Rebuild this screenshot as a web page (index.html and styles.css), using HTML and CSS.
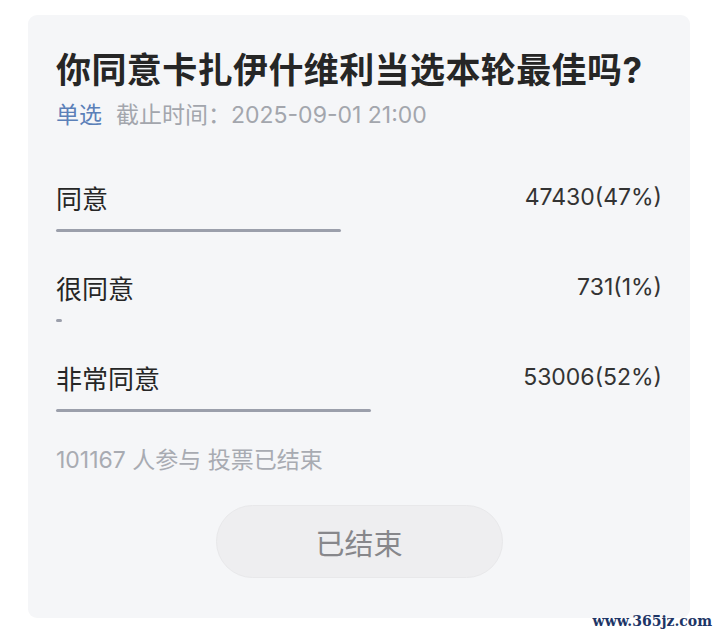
FILE: index.html
```html
<!DOCTYPE html>
<html lang="zh-CN">
<head>
<meta charset="utf-8">
<title>投票</title>
<link rel="stylesheet" href="styles.css">
</head>
<body>
<div class="page">
  <div class="card">
    <h1 class="title">你同意卡扎伊什维利当选本轮最佳吗?</h1>
    <div class="meta"><span class="type">单选</span><span class="deadline">截止时间：2025-09-01 21:00</span></div>
    <div class="options">
      <div class="option">
        <div class="row"><span class="label">同意</span><span class="count">47430(47%)</span></div>
        <div class="track"><div class="bar" style="width:47%"></div></div>
      </div>
      <div class="option">
        <div class="row"><span class="label">很同意</span><span class="count">731(1%)</span></div>
        <div class="track"><div class="bar" style="width:1%"></div></div>
      </div>
      <div class="option">
        <div class="row"><span class="label">非常同意</span><span class="count">53006(52%)</span></div>
        <div class="track"><div class="bar" style="width:52%"></div></div>
      </div>
    </div>
    <div class="footer">101167 人参与 投票已结束</div>
    <div class="btn-wrap"><div class="btn">已结束</div></div>
  </div>
  <div class="watermark">www.365jz.com</div>
</div>
</body>
</html>
```

FILE: styles.css
```css
* { box-sizing: border-box; }
html, body {
  margin: 0;
  padding: 0;
  background: #ffffff;
}
body {
  font-family: "Inter", "Noto Sans CJK SC", sans-serif;
}
.page {
  position: relative;
  width: 720px;
  height: 637px;
  padding: 15px 30px 0 28px;
}
.card {
  width: 662px;
  height: 603px;
  background: #f5f6f8;
  border-radius: 9px;
  padding: 35px 28px 0 28px;
}
.title {
  margin: 0;
  font-size: 35px;
  line-height: 40px;
  font-weight: 700;
  color: #262626;
  letter-spacing: 0.4px;
}
.meta {
  margin-top: 10px;
  font-size: 23px;
  line-height: 30px;
  color: #a3a6ad;
  display: flex;
  gap: 14px;
}
.type {
  color: #5b80b8;
}
.options {
  margin-top: 49px;
  display: flex;
  flex-direction: column;
}
.option {
  height: 90px;
}
.row {
  display: flex;
  justify-content: space-between;
  align-items: center;
  height: 36px;
}
.label {
  font-size: 26px;
  color: #262626;
}
.count {
  font-size: 23px;
  color: #333333;
}
.track {
  margin-top: 14px;
  height: 3px;
  width: 100%;
}
.bar {
  height: 3px;
  min-width: 6px;
  background: #9b9fab;
  border-radius: 2px;
}
.footer {
  margin-top: -3px;
  font-size: 23px;
  line-height: 28px;
  color: #a8abb2;
}
.btn-wrap {
  margin-top: 31px;
  display: flex;
  justify-content: center;
}
.btn {
  width: 287px;
  height: 73px;
  border-radius: 37px;
  background: #eeeef0;
  border: 1px solid #e8e8ea;
  display: flex;
  align-items: center;
  justify-content: center;
  font-size: 29px;
  color: #87878b;
}
.watermark {
  position: absolute;
  right: 8px;
  bottom: 8px;
  font-family: "DejaVu Serif", serif;
  font-weight: 700;
  font-size: 14px;
  color: #1d3566;
}
```
